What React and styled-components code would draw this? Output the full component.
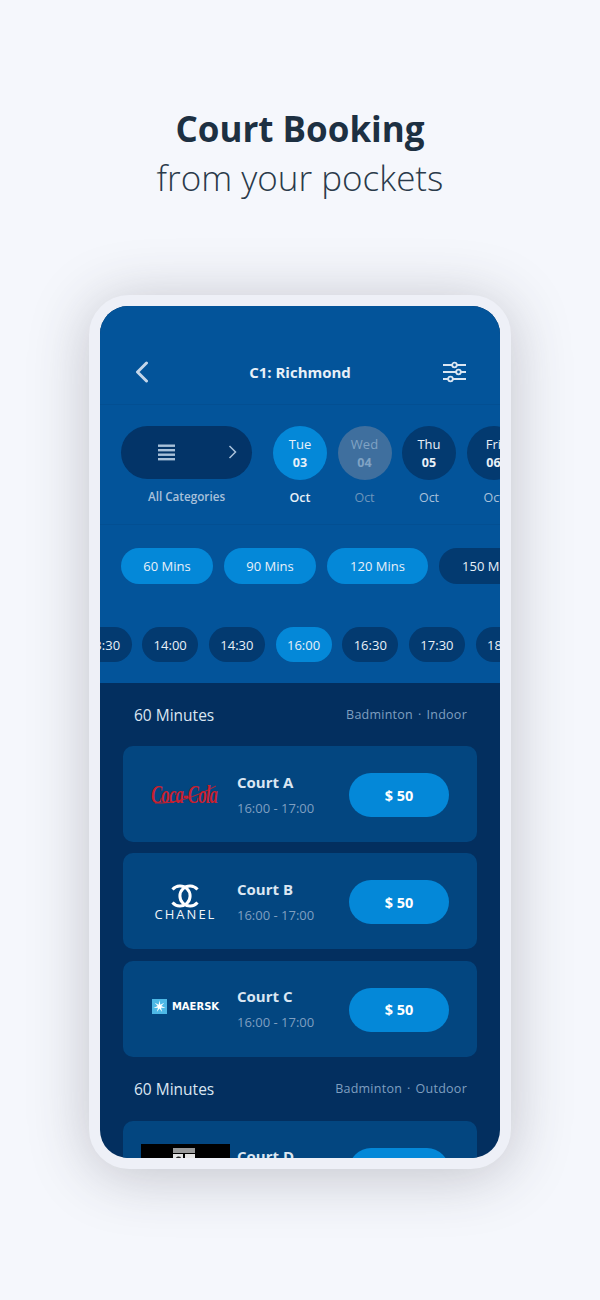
import React from "react";
import styled, { createGlobalStyle } from "styled-components";

const dates = [
  { day: "Tue", num: "03", state: "active" },
  { day: "Wed", num: "04", state: "off" },
  { day: "Thu", num: "05" },
  { day: "Fri", num: "06" },
];
const durations = [
  { label: "60 Mins", width: 92, on: true },
  { label: "90 Mins", width: 92, on: true },
  { label: "120 Mins", width: 101, on: true },
  { label: "150 Mins", width: 101 },
];
const times = ["13:30", "14:00", "14:30", "16:00", "16:30", "17:30", "18:00"];

// seven pointed star of the shipping logo
const starPoints = Array.from({ length: 14 }, (_, i) => {
  const r = i % 2 === 0 ? 6.2 : 1.9;
  const a = (i * Math.PI) / 7 - Math.PI / 2;
  return `${(7.5 + r * Math.cos(a)).toFixed(2)},${(7.5 + r * Math.sin(a)).toFixed(2)}`;
}).join(" ");

const App = () => {
  return (
    <>
      <GlobalStyle />
      <Page>
        <Title>Court Booking</Title>
        <Subtitle>from your pockets</Subtitle>
        <Phone>
          <Screen>
            <TopPanel>
              <Header>
                <IconSlot>
                  <svg width="16" height="22" viewBox="0 0 16 22" fill="none">
                    <path d="M12.5 2 L3.5 11 L12.5 20" stroke="#c3d6ea" strokeWidth="3" strokeLinecap="round" strokeLinejoin="round" />
                  </svg>
                </IconSlot>
                <HeaderTitle>C1: Richmond</HeaderTitle>
                <IconSlot $right>
                  <svg width="23" height="22" viewBox="0 0 23 22" fill="none" stroke="#dbe6f2" strokeWidth="1.8">
                    <path d="M0 4h9M14 4h9M0 11h13M18 11h5M0 18h5M10 18h13" />
                    <circle cx="11.5" cy="4" r="2.3" />
                    <circle cx="15.5" cy="11" r="2.3" />
                    <circle cx="7.5" cy="18" r="2.3" />
                  </svg>
                </IconSlot>
              </Header>
              <DateRow>
                <CategoryBlock>
                  <CategoryPill>
                    <svg width="17" height="17" viewBox="0 0 17 17" fill="#a9c1da">
                      <rect y="0.5" width="17" height="2.4" />
                      <rect y="5" width="17" height="2.4" />
                      <rect y="9.5" width="17" height="2.4" />
                      <rect y="14" width="17" height="2.4" />
                    </svg>
                    <PillArrow>
                      <svg width="9" height="14" viewBox="0 0 9 14" fill="none">
                        <path d="M1.5 1 L7.5 7 L1.5 13" stroke="#a9c1da" strokeWidth="1.5" />
                      </svg>
                    </PillArrow>
                  </CategoryPill>
                  <CategoryLabel>All Categories</CategoryLabel>
                </CategoryBlock>
                <DateList>
                  {dates.map((d) => (
                    <DateItem key={d.num}>
                      <DateCircle $state={d.state}>
                        <DayName>{d.day}</DayName>
                        <DayNum>{d.num}</DayNum>
                      </DateCircle>
                      <Month $state={d.state}>Oct</Month>
                    </DateItem>
                  ))}
                </DateList>
              </DateRow>
              <DurationRow>
                {durations.map((d) => (
                  <Duration key={d.label} $on={d.on} $width={d.width}>
                    {d.label}
                  </Duration>
                ))}
              </DurationRow>
              <TimeRow>
                {times.map((t) => (
                  <TimeChip key={t} $on={t === "16:00"}>
                    {t}
                  </TimeChip>
                ))}
              </TimeRow>
            </TopPanel>
            <Results>
              <SectionHead>
                <SectionTitle>60 Minutes</SectionTitle>
                <SectionMeta>Badminton · Indoor</SectionMeta>
              </SectionHead>
              <CardList>
                <Card>
                  <LogoSlot>
                    <CocaCola>
                      <CocaWord>Coca-Cola</CocaWord>
                      <svg width="66" height="24" viewBox="0 0 66 24" fill="none">
                        <path d="M4 20 C24 21 44 14 65 3" stroke="#c8202f" strokeWidth="1" />
                      </svg>
                    </CocaCola>
                  </LogoSlot>
                  <CourtInfo>
                    <CourtName>Court A</CourtName>
                    <CourtTime>16:00 - 17:00</CourtTime>
                  </CourtInfo>
                  <PriceButton>$ 50</PriceButton>
                </Card>
                <Card>
                  <LogoSlot>
                    <Chanel>
                      <svg width="30" height="24" viewBox="0 0 30 24" fill="none" stroke="#fff" strokeWidth="3">
                        <path d="M2.5 5.5 A10 10 0 1 1 2.5 18.5" />
                        <path d="M27.5 5.5 A10 10 0 1 0 27.5 18.5" />
                      </svg>
                      <ChanelName>CHANEL</ChanelName>
                    </Chanel>
                  </LogoSlot>
                  <CourtInfo>
                    <CourtName>Court B</CourtName>
                    <CourtTime>16:00 - 17:00</CourtTime>
                  </CourtInfo>
                  <PriceButton>$ 50</PriceButton>
                </Card>
                <Card>
                  <LogoSlot>
                    <Maersk>
                      <svg width="15" height="15" viewBox="0 0 15 15">
                        <rect width="15" height="15" fill="#4db8e6" />
                        <polygon points={starPoints} fill="#fff" />
                      </svg>
                      <MaerskName>MAERSK</MaerskName>
                    </Maersk>
                  </LogoSlot>
                  <CourtInfo>
                    <CourtName>Court C</CourtName>
                    <CourtTime>16:00 - 17:00</CourtTime>
                  </CourtInfo>
                  <PriceButton>$ 50</PriceButton>
                </Card>
              </CardList>
              <SectionHead $second>
                <SectionTitle>60 Minutes</SectionTitle>
                <SectionMeta>Badminton · Outdoor</SectionMeta>
              </SectionHead>
              <CardList>
                <Card>
                  <LogoSlot>
                    <BlackLogo>
                      <svg width="24" height="24" viewBox="0 0 24 24" fill="#e4e4e4">
                        <path d="M1 1 H23 V6 H1 Z" fill="#9a9a9a" />
                        <path d="M1 7 H11 V24 H1 Z M13 7 H23 V11 H13 Z" />
                        <path d="M3 12 C5 9 7 9 9 10 L8 12 Z" fill="#222" />
                      </svg>
                    </BlackLogo>
                  </LogoSlot>
                  <CourtInfo>
                    <CourtName>Court D</CourtName>
                    <CourtTime>16:00 - 17:00</CourtTime>
                  </CourtInfo>
                  <PriceButton>$ 50</PriceButton>
                </Card>
              </CardList>
            </Results>
          </Screen>
        </Phone>
      </Page>
    </>
  );
};

export default App;

const GlobalStyle = createGlobalStyle`
  * { box-sizing: border-box; }
  body {
    margin: 0;
    font-family: "Open Sans", sans-serif;
    background: #f5f7fc;
  }
`;

const Page = styled.div`
  width: 600px;
  height: 1300px;
  overflow: hidden;
  padding-top: 104px;
  display: flex;
  flex-direction: column;
  align-items: center;
  background: #f5f7fc;
`;

const Title = styled.h1`
  margin: 0;
  font-size: 35px;
  line-height: 49px;
  font-weight: 700;
  color: #1d3042;
`;

const Subtitle = styled.h2`
  margin: 0;
  font-size: 35px;
  line-height: 49px;
  font-weight: 300;
  color: #2a3a4a;
`;

const Phone = styled.div`
  margin-top: 93px;
  width: 422px;
  height: 874px;
  flex-shrink: 0;
  border: 11px solid #eef0f7;
  border-radius: 40px;
  box-shadow: 0 6px 60px rgba(50, 52, 65, 0.27);
  background: #eef0f7;
`;

const Screen = styled.div`
  width: 400px;
  height: 852px;
  border-radius: 28px;
  overflow: hidden;
  background: #032f5f;
`;

const TopPanel = styled.div`
  height: 377px;
  background: #03549a;
  overflow: hidden;
`;

const Header = styled.div`
  height: 99px;
  padding: 33px 34px 0 34px;
  display: flex;
  align-items: center;
  justify-content: space-between;
  border-bottom: 1px solid #034f92;
`;

const IconSlot = styled.div`
  width: 24px;
  display: flex;
  align-items: center;
  justify-content: ${(p) => (p.$right ? "flex-end" : "flex-start")};
`;

const HeaderTitle = styled.div`
  font-size: 15px;
  font-weight: 700;
  color: #e8f0f8;
`;

const DateRow = styled.div`
  height: 120px;
  padding: 21px 0 0 21px;
  display: flex;
  border-bottom: 1px solid #034f92;
  overflow: hidden;
`;

const CategoryBlock = styled.div`
  width: 131px;
  flex-shrink: 0;
  display: flex;
  flex-direction: column;
  align-items: center;
`;

const CategoryPill = styled.div`
  position: relative;
  width: 131px;
  height: 53px;
  border-radius: 27px;
  background: #033468;
  display: flex;
  align-items: center;
  justify-content: center;
  padding-right: 40px;
`;

const PillArrow = styled.div`
  position: absolute;
  right: 15px;
  top: 19px;
  display: flex;
`;

const CategoryLabel = styled.div`
  margin-top: 9px;
  font-size: 11.7px;
  font-weight: 600;
  line-height: 17px;
  color: #a9c1da;
`;

const DateList = styled.div`
  margin-left: 21px;
  display: flex;
  gap: 10.5px;
`;

const DateItem = styled.div`
  width: 54px;
  flex-shrink: 0;
  display: flex;
  flex-direction: column;
  align-items: center;
`;

const circleBg = { active: "#0488d8", off: "#3f6f9e" };

const DateCircle = styled.div`
  width: 54px;
  height: 54px;
  border-radius: 50%;
  background: ${(p) => circleBg[p.$state] || "#033a70"};
  color: ${(p) => (p.$state === "off" ? "#80a3c4" : "#e8f0f8")};
  display: flex;
  flex-direction: column;
  align-items: center;
  justify-content: center;
  gap: 1px;
`;

const DayName = styled.span`
  font-size: 13px;
  line-height: 18px;
  color: inherit;
`;

const DayNum = styled.span`
  font-size: 12.5px;
  line-height: 18px;
  font-weight: 700;
`;

const Month = styled.div`
  margin-top: 9px;
  font-size: 12.5px;
  line-height: 18px;
  font-weight: ${(p) => (p.$state === "active" ? 600 : 500)};
  color: ${(p) =>
    p.$state === "active" ? "#e8f0f8" : p.$state === "off" ? "#6c94bb" : "#a9c1da"};
`;

const DurationRow = styled.div`
  margin-top: 23px;
  padding-left: 21px;
  display: flex;
  gap: 11px;
`;

const Duration = styled.div`
  width: ${(p) => p.$width}px;
  height: 36px;
  flex-shrink: 0;
  border-radius: 18px;
  background: ${(p) => (p.$on ? "#0488d8" : "#033a70")};
  color: #e8f0f8;
  font-size: 13px;
  font-weight: 500;
  display: flex;
  align-items: center;
  justify-content: center;
`;

const TimeRow = styled.div`
  margin-top: 43px;
  margin-left: -24.5px;
  display: flex;
  gap: 10.7px;
`;

const TimeChip = styled.div`
  width: 56px;
  height: 35px;
  flex-shrink: 0;
  border-radius: 18px;
  background: ${(p) => (p.$on ? "#0488d8" : "#033a70")};
  color: #e8f0f8;
  font-size: 13px;
  display: flex;
  align-items: center;
  justify-content: center;
`;

const Results = styled.div`
  padding: 0 23px;
`;

const SectionHead = styled.div`
  height: ${(p) => (p.$second ? "64px" : "63px")};
  padding: 0 10px 0 11px;
  display: flex;
  align-items: center;
  justify-content: space-between;
`;

const SectionTitle = styled.div`
  font-size: 15.5px;
  font-weight: 500;
  color: #dbe6f2;
`;

const SectionMeta = styled.div`
  font-size: 12.5px;
  letter-spacing: 0.25px;
  word-spacing: 1.5px;
  color: #7f9fc0;
`;

const CardList = styled.div`
  display: flex;
  flex-direction: column;
  gap: 11.4px;
`;

const Card = styled.div`
  height: 96px;
  flex-shrink: 0;
  border-radius: 10px;
  background: #034680;
  display: flex;
  align-items: center;
  padding: 2px 0 0 18px;
`;

const LogoSlot = styled.div`
  width: 89px;
  height: 60px;
  margin-right: 7px;
  display: flex;
  align-items: center;
  justify-content: center;
  flex-shrink: 0;
`;

const CourtInfo = styled.div`
  width: 112px;
  margin-top: -2px;
  flex-shrink: 0;
`;

const CourtName = styled.div`
  font-size: 15px;
  line-height: 20px;
  font-weight: 700;
  color: #dbe6f2;
`;

const CourtTime = styled.div`
  margin-top: 7px;
  font-size: 13px;
  line-height: 18px;
  color: #7f9fc0;
`;

const PriceButton = styled.div`
  width: 100px;
  height: 44px;
  border-radius: 22px;
  background: #0488d8;
  color: #fff;
  font-size: 14.5px;
  font-weight: 700;
  display: flex;
  align-items: center;
  justify-content: center;
`;

const CocaCola = styled.div`
  position: relative;
  width: 66px;
  height: 24px;
  margin-left: -3px;
  svg {
    position: absolute;
    left: 0;
    top: 0;
  }
`;

const CocaWord = styled.div`
  font-family: "Liberation Serif", serif;
  font-style: italic;
  font-weight: 700;
  font-size: 26px;
  line-height: 24px;
  letter-spacing: -1.2px;
  color: #c8202f;
  white-space: nowrap;
  transform: scaleX(0.64);
  transform-origin: left center;
`;

const Chanel = styled.div`
  display: flex;
  flex-direction: column;
  align-items: center;
`;

const ChanelName = styled.div`
  margin-top: -1px;
  font-size: 13px;
  line-height: 14px;
  letter-spacing: 2px;
  color: #f2f5f9;
`;

const Maersk = styled.div`
  display: flex;
  align-items: center;
  gap: 5px;
  margin-bottom: 7px;
`;

const MaerskName = styled.div`
  font-family: "DejaVu Sans", sans-serif;
  font-size: 10px;
  font-weight: 700;
  color: #fff;
`;

const BlackLogo = styled.div`
  width: 89px;
  height: 52px;
  background: #000;
  display: flex;
  justify-content: center;
  padding: 3px 4px 0 0;
  overflow: hidden;
`;
